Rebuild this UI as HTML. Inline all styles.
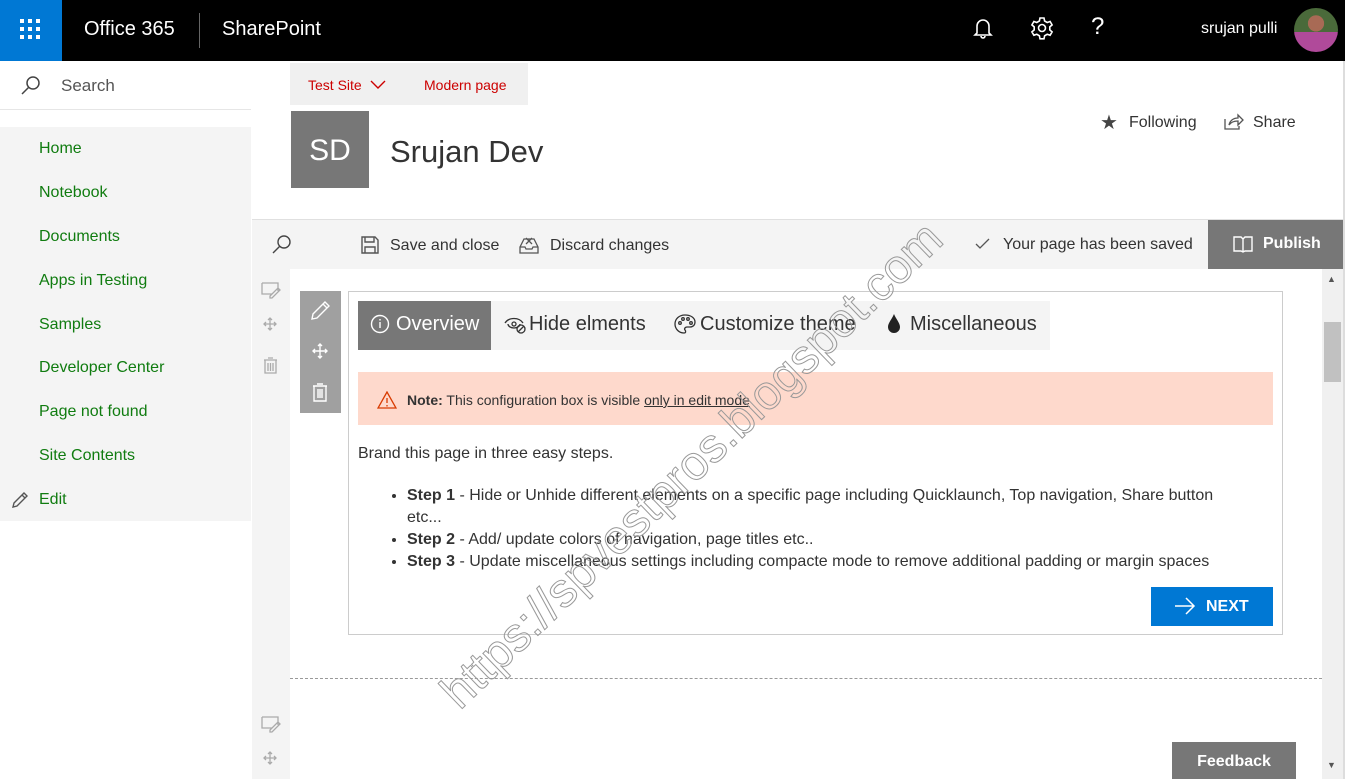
<!DOCTYPE html>
<html><head><meta charset="utf-8"><style>
*{margin:0;padding:0;box-sizing:border-box}
body{width:1345px;height:779px;overflow:hidden;background:#fff;font-family:"Segoe UI","Liberation Sans",sans-serif;position:relative;color:#333}
.a{position:absolute}
.nav{left:39px;font-size:16px;color:#107c10}
svg{position:absolute}
</style></head><body>
<div class="a" style="left:0;top:0;width:1345px;height:61px;background:#000"></div>
<div class="a" style="left:0;top:0;width:62px;height:61px;background:#0078d4"></div>
<svg style="left:20px;top:19px" width="22" height="22" fill="#fff"><g>
<rect x="0" y="0" width="4" height="4"/><rect x="8" y="0" width="4" height="4"/><rect x="16" y="0" width="4" height="4"/>
<rect x="0" y="8" width="4" height="4"/><rect x="8" y="8" width="4" height="4"/><rect x="16" y="8" width="4" height="4"/>
<rect x="0" y="16" width="4" height="4"/><rect x="8" y="16" width="4" height="4"/><rect x="16" y="16" width="4" height="4"/></g></svg>
<div class="a" style="left:84px;top:18px;color:#fff;font-size:20px">Office 365</div>
<div class="a" style="left:199px;top:13px;width:1px;height:35px;background:#666"></div>
<div class="a" style="left:222px;top:18px;color:#fff;font-size:20px">SharePoint</div>
<svg style="left:973px;top:17px" width="20" height="22" fill="none" stroke="#fff" stroke-width="1.6"><path d="M4 16V9a6 6 0 0 1 12 0v7l2 2H2z"/><path d="M8 19a2 2 0 0 0 4 0"/></svg>
<svg style="left:1030px;top:16px" width="24" height="24" fill="none" stroke="#fff" stroke-width="1.6"><circle cx="12" cy="12" r="3.5"/><path d="M10 2h4l.6 3 2.6 1.5 2.9-1 2 3.4-2.3 2v3l2.3 2-2 3.4-2.9-1-2.6 1.5-.6 3h-4l-.6-3-2.6-1.5-2.9 1-2-3.4 2.3-2v-3l-2.3-2 2-3.4 2.9 1L9.4 5z"/></svg>
<div class="a" style="left:1091px;top:13px;color:#fff;font-size:24px">?</div>
<div class="a" style="left:1201px;top:20px;color:#fff;font-size:16px">srujan pulli</div>
<div class="a" style="left:1294px;top:8px;width:44px;height:44px;border-radius:50%;background:radial-gradient(circle at 50% 35%,#a86a55 0 22%,transparent 23%),linear-gradient(#4a6a3a 0 55%,#b04a9a 55%)"></div>

<svg style="left:20px;top:75px" width="22" height="22" fill="none" stroke="#444" stroke-width="1.5"><circle cx="13" cy="8" r="6"/><path d="M9 12L2 19"/></svg>
<div class="a" style="left:61px;top:76px;font-size:17px;color:#555">Search</div>
<div class="a" style="left:0;top:109px;width:251px;height:1px;background:#e6e6e6"></div>
<div class="a" style="left:0;top:127px;width:251px;height:394px;background:#f4f4f4"></div>
<div class="a nav" style="top:140px">Home</div>
<div class="a nav" style="top:184px">Notebook</div>
<div class="a nav" style="top:228px">Documents</div>
<div class="a nav" style="top:272px">Apps in Testing</div>
<div class="a nav" style="top:316px">Samples</div>
<div class="a nav" style="top:359px">Developer Center</div>
<div class="a nav" style="top:403px">Page not found</div>
<div class="a nav" style="top:447px">Site Contents</div>
<svg style="left:10px;top:490px" width="20" height="20" fill="none" stroke="#555" stroke-width="1.4"><path d="M3 17l1-4L14 3l3 3L7 16z M12 5l3 3"/></svg>
<div class="a nav" style="top:491px">Edit</div>

<div class="a" style="left:290px;top:63px;width:238px;height:42px;background:#f0f0f0"></div>
<div class="a" style="left:308px;top:77px;font-size:14px;color:#c00">Test Site</div>
<svg style="left:370px;top:80px" width="16" height="10" fill="none" stroke="#c00" stroke-width="1.4"><path d="M1 1l7 7 7-7"/></svg>
<div class="a" style="left:424px;top:77px;font-size:14px;color:#c00">Modern page</div>
<div class="a" style="left:291px;top:111px;width:78px;height:77px;background:#777;color:#fff;font-size:30px;text-align:center;line-height:79px">SD</div>
<div class="a" style="left:390px;top:134px;font-size:31px;color:#333">Srujan Dev</div>
<div class="a" style="left:1100px;top:110px;font-size:20px;color:#444">★</div>
<div class="a" style="left:1129px;top:114px;font-size:16px;color:#333">Following</div>
<svg style="left:1223px;top:113px" width="22" height="18" fill="none" stroke="#555" stroke-width="1.3"><path d="M2 6v10h14v-3"/><path d="M6 12c1-5 5-7 9-7V2l5 5-5 5V8c-4 0-7 1-9 4z"/></svg>
<div class="a" style="left:1253px;top:114px;font-size:16px;color:#333">Share</div>
<div class="a" style="left:1343px;top:61px;width:2px;height:718px;background:#ddd"></div>

<div class="a" style="left:252px;top:219px;width:1091px;height:50px;background:#f4f4f4;border-top:1px solid #e0e0e0"></div>
<svg style="left:271px;top:234px" width="22" height="22" fill="none" stroke="#444" stroke-width="1.4"><circle cx="13" cy="8" r="6"/><path d="M9 12L2 19"/></svg>
<svg style="left:361px;top:236px" width="18" height="18" fill="none" stroke="#555" stroke-width="1.4"><path d="M1 1h13l3 3v13H1z"/><path d="M4 1v5h9V1M4 17v-6h10v6"/></svg>
<div class="a" style="left:390px;top:237px;font-size:16px;color:#333">Save and close</div>
<svg style="left:519px;top:235px" width="20" height="20" fill="none" stroke="#555" stroke-width="1.3"><path d="M1 18h18v-6l-4-8H5l-4 8z M1 12h5l1 2h6l1-2h5 M7 3l6 6M13 3l-6 6"/></svg>
<div class="a" style="left:550px;top:237px;font-size:16px;color:#333">Discard changes</div>
<svg style="left:975px;top:237px" width="16" height="14" fill="none" stroke="#555" stroke-width="1.3"><path d="M1 7l4 4 9-9"/></svg>
<div class="a" style="left:1003px;top:236px;font-size:16px;color:#333">Your page has been saved</div>
<div class="a" style="left:1208px;top:220px;width:135px;height:49px;background:#777"></div>
<svg style="left:1233px;top:235px" width="20" height="18" fill="none" stroke="#fff" stroke-width="1.4"><path d="M1 2h7l2 2 2-2h7v14h-7l-2 1-2-1H1z M10 4v13"/></svg>
<div class="a" style="left:1263px;top:235px;font-size:16px;font-weight:bold;color:#fff">Publish</div>

<div class="a" style="left:252px;top:269px;width:38px;height:510px;background:#f4f4f4"></div>
<div class="a" style="left:1322px;top:269px;width:21px;height:510px;background:#f0f0f0"></div>
<div class="a" style="left:1324px;top:322px;width:17px;height:60px;background:#c1c1c1"></div>
<div class="a" style="left:1327px;top:274px;font-size:9px;color:#555">▲</div>
<div class="a" style="left:1327px;top:760px;font-size:9px;color:#555">▼</div>
<svg style="left:260px;top:280px" width="22" height="100" fill="none" stroke="#aaa" stroke-width="1.3"><path d="M2 3h16v8M2 3v11h10 M10 16l8-8 2 2-8 8h-2z"/><path d="M10 38v12M4 44h12M8 40l2-2 2 2M8 48l2 2 2-2M6 42l-2 2 2 2M14 42l2 2-2 2"/><path d="M4 80h13M8 78h5M5 80v13h11V80M8 83v8M10.5 83v8M13 83v8"/></svg>
<svg style="left:260px;top:714px" width="22" height="60" fill="none" stroke="#aaa" stroke-width="1.3"><path d="M2 3h16v8M2 3v11h10 M10 16l8-8 2 2-8 8h-2z"/><path d="M10 38v12M4 44h12M8 40l2-2 2 2M8 48l2 2 2-2M6 42l-2 2 2 2M14 42l2 2-2 2"/></svg>

<div class="a" style="left:300px;top:291px;width:41px;height:122px;background:#a0a0a0"></div>
<svg style="left:309px;top:298px" width="24" height="110" fill="none" stroke="#fff" stroke-width="1.4"><path d="M3 21l1-5L16 4l4 4L8 20z M14 6l4 4"/><path d="M11 46v14M4 53h14M9 48l2-2 2 2M9 58l2 2 2-2M6 51l-2 2 2 2M16 51l2 2-2 2"/><path d="M4 88h14M8 86h6M5 88v15h12V88M9 91v9M11 91v9M13 91v9"/></svg>

<div class="a" style="left:348px;top:291px;width:935px;height:344px;border:1px solid #ccc"></div>
<div class="a" style="left:358px;top:301px;width:692px;height:49px;background:#f4f4f4"></div>
<div class="a" style="left:358px;top:301px;width:133px;height:49px;background:#777"></div>
<svg style="left:370px;top:314px" width="20" height="20" fill="none" stroke="#fff" stroke-width="1.4"><circle cx="10" cy="10" r="8.5"/><path d="M10 8v6M10 5v1.5"/></svg>
<div class="a" style="left:396px;top:313px;font-size:20px;color:#fff">Overview</div>
<svg style="left:504px;top:316px" width="22" height="18" fill="none" stroke="#333" stroke-width="1.3"><path d="M1 7c4-6 14-6 18 0M4 8a6 4 0 0 0 12 0"/><circle cx="10" cy="8" r="2"/><circle cx="17" cy="13" r="4"/><path d="M14 16l6-6"/></svg>
<div class="a" style="left:529px;top:313px;font-size:20px;color:#333">Hide elments</div>
<svg style="left:674px;top:314px" width="22" height="20" fill="none" stroke="#333" stroke-width="1.3"><path d="M11 1C5 1 1 5 1 10s4 9 9 9c2 0 2-2 1-3s0-3 2-3h3c3 0 5-2 5-5 0-4-4-7-10-7z"/><circle cx="6" cy="9" r="1.3"/><circle cx="9" cy="5" r="1.3"/><circle cx="14" cy="5" r="1.3"/><circle cx="17" cy="9" r="1.3"/></svg>
<div class="a" style="left:700px;top:313px;font-size:20px;color:#333">Customize theme</div>
<svg style="left:886px;top:313px" width="16" height="22" fill="#222"><path d="M8 1C6 6 2 10 2 14a6 6 0 0 0 12 0c0-4-4-8-6-13z"/></svg>
<div class="a" style="left:910px;top:313px;font-size:20px;color:#333">Miscellaneous</div>

<div class="a" style="left:358px;top:372px;width:915px;height:53px;background:#fed9cc"></div>
<svg style="left:377px;top:391px" width="20" height="18" fill="none" stroke="#d83b01" stroke-width="1.3"><path d="M10 1L1 17h18z M10 7v5M10 14v1.5"/></svg>
<div class="a" style="left:407px;top:392px;font-size:14px;color:#333"><b>Note:</b> This configuration box is visible <u>only in edit mode</u></div>
<div class="a" style="left:358px;top:445px;font-size:16px;color:#333">Brand this page in three easy steps.</div>
<ul class="a" style="left:407px;top:485px;width:870px;font-size:16px;color:#333;line-height:22px;list-style:disc">
<li><b>Step 1</b> - Hide or Unhide different elements on a specific page including Quicklaunch, Top navigation, Share button<br>etc...</li>
<li><b>Step 2</b> - Add/ update colors of navigation, page titles etc..</li>
<li><b>Step 3</b> - Update miscellaneous settings including compacte mode to remove additional padding or margin spaces</li>
</ul>
<div class="a" style="left:1151px;top:587px;width:122px;height:39px;background:#0078d4"></div>
<svg style="left:1174px;top:597px" width="22" height="18" fill="none" stroke="#fff" stroke-width="1.5"><path d="M1 9h19M12 1l8 8-8 8"/></svg>
<div class="a" style="left:1206px;top:598px;font-size:16px;font-weight:bold;color:#fff">NEXT</div>
<div class="a" style="left:290px;top:678px;width:1032px;border-top:1px dashed #999"></div>
<div class="a" style="left:1172px;top:742px;width:124px;height:37px;background:#777;color:#fff;font-size:16px;font-weight:bold;text-align:center;line-height:39px">Feedback</div>

<div class="a" style="font-size:48px;color:transparent;-webkit-text-stroke:1px #999;transform:rotate(-44deg);transform-origin:left top;white-space:nowrap;top:680px;left:430px">https://spvestpros.blogspot.com</div>
</body></html>
